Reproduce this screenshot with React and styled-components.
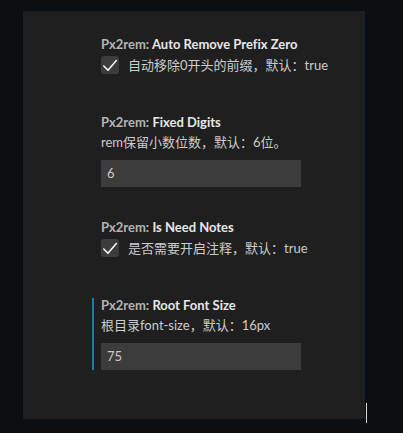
import React from "react";
import styled, { createGlobalStyle } from "styled-components";

const Global = createGlobalStyle`
  html, body { margin: 0; padding: 0; background: #0c0f11; }
  body {
    width: 403px;
    height: 433px;
    overflow: hidden;
    font-family: Lato, "Noto Sans CJK SC", sans-serif;
    font-variant-ligatures: none;
  }
`;

const Page = styled.div`
  position: relative;
  width: 403px;
  height: 433px;
  padding: 11px 38px 14px 23px;
  box-sizing: border-box;
`;

const Panel = styled.div`
  background: #1f1f1f;
  height: 408px;
  padding: 13px 0 0 78px;
  box-sizing: border-box;
  display: flex;
  flex-direction: column;
`;

const Item = styled.div`
  padding: 13px 0 ${(p) => (p.$bool ? 28 : 20)}px 0;
`;

const Body = styled.div`
  margin-left: -9px;
  padding-left: 7px;
  border-left: 2px solid ${(p) => (p.$focused ? "#1080a6" : "transparent")};
  display: flex;
  flex-direction: column;
`;

const Title = styled.div`
  margin-top: -2px;
  font-size: 13px;
  line-height: 18px;
  font-weight: 700;
  color: #e7e7e7;
  white-space: nowrap;
`;

const Category = styled.span`
  color: #b4b4b4;
`;

const Desc = styled.div`
  margin-top: 2px;
  font-size: 13px;
  line-height: 18px;
  color: #cccccc;
  white-space: nowrap;
`;

const BoolRow = styled.div`
  margin-top: 3px;
  display: flex;
  align-items: center;
  gap: 9px;
  font-size: 13px;
  line-height: 18px;
  color: #cccccc;
  white-space: nowrap;
`;

const Check = styled.div`
  width: 18px;
  height: 18px;
  border-radius: 3px;
  background: #3c3c3c;
  display: flex;
  align-items: center;
  justify-content: center;
  flex: none;
`;

const Input = styled.div`
  margin-top: 9px;
  width: 200px;
  height: 27px;
  background: #3c3c3c;
  color: #cccccc;
  font-size: 13px;
  line-height: 27px;
  padding-left: 6px;
  box-sizing: border-box;
`;

const Cursor = styled.div`
  position: absolute;
  left: 366px;
  top: 403px;
  width: 1px;
  height: 20px;
  background: #d8d8d8;
`;

const CheckIcon = () => (
  <svg width="18" height="18" viewBox="0 0 18 18">
    <path d="M2.8 10 L7 14.3 L15.3 4.6" fill="none" stroke="#ffffff" strokeWidth="1.5" strokeLinecap="round" strokeLinejoin="round" />
  </svg>
);

const settings = [
  { key: "Auto Remove Prefix Zero", type: "bool", desc: "自动移除0开头的前缀，默认：true" },
  { key: "Fixed Digits", type: "text", desc: "rem保留小数位数，默认：6位。", value: "6" },
  { key: "Is Need Notes", type: "bool", desc: "是否需要开启注释，默认：true" },
  { key: "Root Font Size", type: "text", desc: "根目录font-size，默认：16px", value: "75", focused: true },
];

export default function App() {
  return (
    <>
      <Global />
      <Page>
        <Panel>
          {settings.map((s) => (
            <Item key={s.key} $bool={s.type === "bool"}>
              <Body $focused={s.focused}>
                <Title>
                  <Category>Px2rem: </Category>
                  {s.key}
                </Title>
                {s.type === "bool" ? (
                  <BoolRow>
                    <Check>
                      <CheckIcon />
                    </Check>
                    {s.desc}
                  </BoolRow>
                ) : (
                  <>
                    <Desc>{s.desc}</Desc>
                    <Input>{s.value}</Input>
                  </>
                )}
              </Body>
            </Item>
          ))}
        </Panel>
        <Cursor />
      </Page>
    </>
  );
}
